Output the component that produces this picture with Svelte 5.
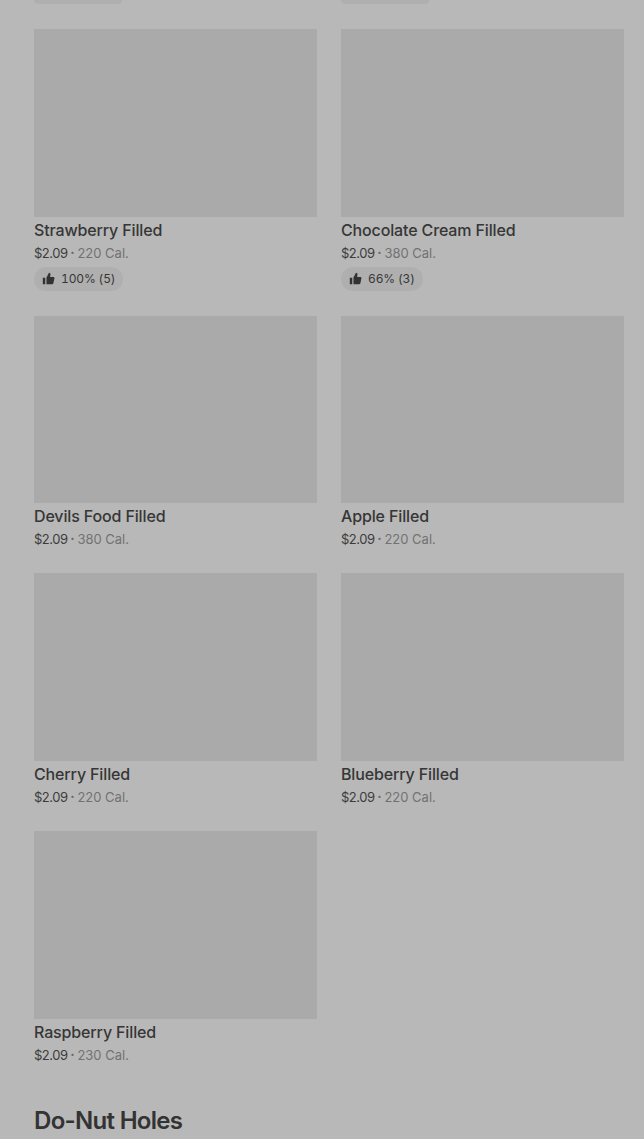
<script>
  const thumbPath = 'M1 7h3v8H1V7zm4.5 8V6.8L8.6 1c1.3 0 2 .9 1.8 2.1L10 6h4c.9 0 1.5.8 1.3 1.7l-1.3 6c-.2.8-.8 1.3-1.6 1.3H5.5z'

  const items = [
    { name: 'Strawberry Filled', price: '$2.09', cal: '220 Cal.', rating: '100% (5)' },
    { name: 'Chocolate Cream Filled', price: '$2.09', cal: '380 Cal.', rating: '66% (3)' },
    { name: 'Devils Food Filled', price: '$2.09', cal: '380 Cal.' },
    { name: 'Apple Filled', price: '$2.09', cal: '220 Cal.' },
    { name: 'Cherry Filled', price: '$2.09', cal: '220 Cal.' },
    { name: 'Blueberry Filled', price: '$2.09', cal: '220 Cal.' },
    { name: 'Raspberry Filled', price: '$2.09', cal: '230 Cal.' }
  ]
</script>

<div class="page">
  <div class="cut-row">
    <div class="cut-pill"></div>
    <div class="cut-pill"></div>
  </div>

  <div class="grid">
    {#each items as item}
      <div class="card">
        <div class="thumb"></div>
        <div class="name">{item.name}</div>
        <div class="meta">
          <span class="price">{item.price}</span>
          <span class="dot">•</span>
          <span class="cal">{item.cal}</span>
        </div>
        {#if item.rating}
          <div class="rating">
            <svg width="13" height="13" viewBox="0 0 16 16" aria-hidden="true"><path d={thumbPath} fill="#333" /></svg>
            <span>{item.rating}</span>
          </div>
        {/if}
      </div>
    {/each}
  </div>

  <h2 class="section">Do-Nut Holes</h2>
</div>

<style>
  :global(body) {
    margin: 0;
    background: #b8b8b8;
  }
  .page {
    height: 1139px;
    overflow: hidden;
    background: #b8b8b8;
    padding: 0 20px 0 34px;
    box-sizing: border-box;
    font-family: Inter, "Liberation Sans", sans-serif;
  }
  .cut-row {
    display: grid;
    grid-template-columns: 283px 283px;
    column-gap: 24px;
    height: 4px;
    margin-bottom: 25px;
    overflow: hidden;
  }
  .cut-pill {
    width: 88px;
    height: 4px;
    background: #afafaf;
    border-radius: 0 0 12px 12px;
  }
  .grid {
    display: grid;
    grid-template-columns: 283px 283px;
    column-gap: 24px;
    row-gap: 25px;
  }
  .thumb {
    height: 187.67px;
    background: #aaaaaa;
  }
  .name {
    margin-top: 3px;
    font-size: 16px;
    line-height: 20px;
    font-weight: 500;
    letter-spacing: -0.14px;
    color: #363636;
  }
  .meta {
    margin-top: 4px;
    display: flex;
    align-items: center;
    gap: 3px;
    font-size: 13px;
    line-height: 18px;
  }
  .price { color: #3c3c3c; letter-spacing: -0.5px; }
  .dot { color: #6a6a6a; font-size: 7px; }
  .cal { color: #727272; }
  .rating {
    margin-top: 5px;
    display: inline-flex;
    align-items: center;
    gap: 6px;
    height: 24px;
    padding: 0 8px;
    border-radius: 12px;
    background: #afafaf;
    font-size: 12px;
    letter-spacing: -0.15px;
    font-variant-numeric: tabular-nums;
    color: #363636;
  }
  .section {
    margin: 41px 0 0;
    font-size: 24px;
    line-height: 32px;
    font-weight: 600;
    letter-spacing: -0.7px;
    color: #333333;
  }
</style>
